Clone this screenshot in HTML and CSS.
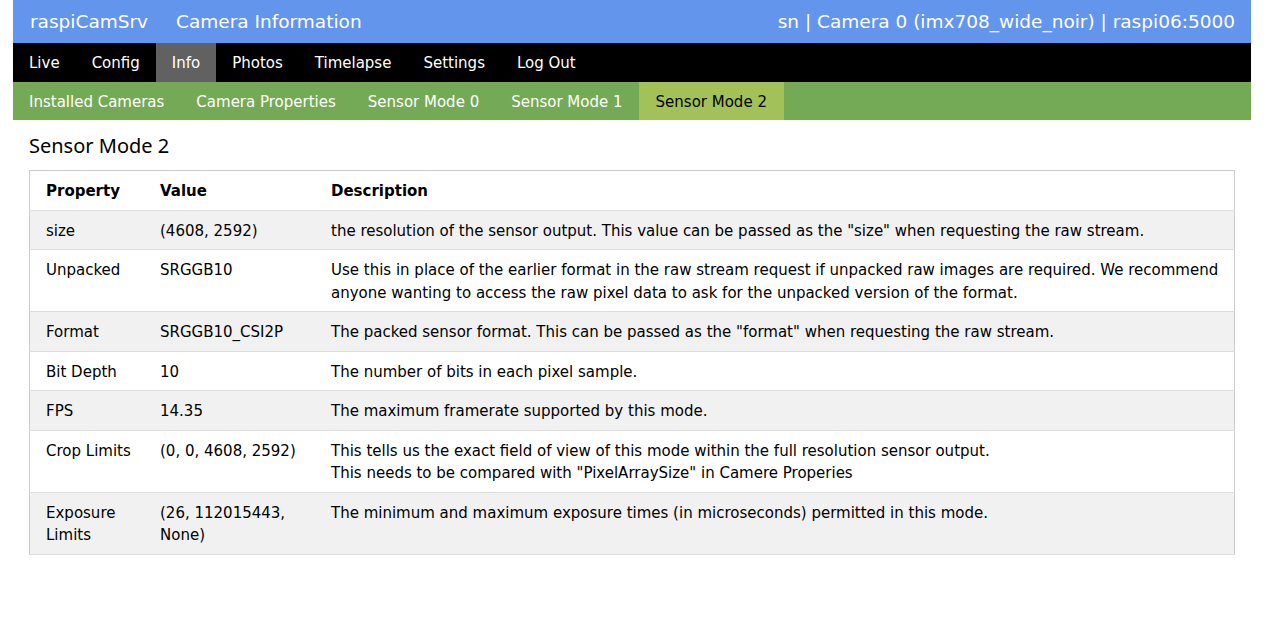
FILE: index.html
```html
<!DOCTYPE html>
<html lang="en">
<head>
<meta charset="utf-8">
<title>raspiCamSrv - Camera Information</title>
<link rel="stylesheet" href="styles.css">
</head>
<body>
<div class="page">
  <header class="topbar">
    <span class="brand">raspiCamSrv</span>
    <span class="title">Camera Information</span>
    <span class="camid">sn | Camera 0 (imx708_wide_noir) | raspi06:5000</span>
  </header>
  <nav class="mainnav">
    <a class="item">Live</a>
    <a class="item">Config</a>
    <a class="item active">Info</a>
    <a class="item">Photos</a>
    <a class="item">Timelapse</a>
    <a class="item">Settings</a>
    <a class="item">Log Out</a>
  </nav>
  <nav class="subnav">
    <a class="item">Installed Cameras</a>
    <a class="item">Camera Properties</a>
    <a class="item">Sensor Mode 0</a>
    <a class="item">Sensor Mode 1</a>
    <a class="item active">Sensor Mode 2</a>
  </nav>
  <main class="content">
    <h4 class="heading">Sensor Mode 2</h4>
    <table class="props">
      <thead>
        <tr><th class="c-prop">Property</th><th class="c-val">Value</th><th class="c-desc">Description</th></tr>
      </thead>
      <tbody>
        <tr><td>size</td><td>(4608, 2592)</td><td>the resolution of the sensor output. This value can be passed as the "size" when requesting the raw stream.</td></tr>
        <tr><td>Unpacked</td><td>SRGGB10</td><td>Use this in place of the earlier format in the raw stream request if unpacked raw images are required. We recommend anyone wanting to access the raw pixel data to ask for the unpacked version of the format.</td></tr>
        <tr><td>Format</td><td>SRGGB10_CSI2P</td><td>The packed sensor format. This can be passed as the "format" when requesting the raw stream.</td></tr>
        <tr><td>Bit Depth</td><td>10</td><td>The number of bits in each pixel sample.</td></tr>
        <tr><td>FPS</td><td>14.35</td><td>The maximum framerate supported by this mode.</td></tr>
        <tr><td>Crop Limits</td><td>(0, 0, 4608, 2592)</td><td>This tells us the exact field of view of this mode within the full resolution sensor output.<br>This needs to be compared with "PixelArraySize" in Camere Properies</td></tr>
        <tr><td>Exposure Limits</td><td>(26, 112015443, None)</td><td>The minimum and maximum exposure times (in microseconds) permitted in this mode.</td></tr>
      </tbody>
    </table>
  </main>
</div>
</body>
</html>
```

FILE: styles.css
```css
html, body {
  margin: 0;
  padding: 0;
  background: #fff;
}
body {
  font-family: "DejaVu Sans", Verdana, sans-serif;
  font-size: 15px;
  line-height: 1.5;
  color: #000;
}
.page {
  margin-left: 13px;
  width: 1238px;
}
.topbar {
  display: flex;
  align-items: center;
  height: 43px;
  background: #6495ed;
  color: #fff;
  font-size: 18.5px;
  padding: 1px 16px 0 17px;
  box-sizing: border-box;
}
.brand {
  margin-right: 28px;
}
.camid {
  margin-left: auto;
}
.mainnav, .subnav {
  display: flex;
  height: 39px;
}
.mainnav {
  background: #000;
}
.subnav {
  background: #74aa55;
  height: 38px;
}
.item {
  display: block;
  padding: 9px 16px 7px;
  color: #fff;
  text-decoration: none;
}
.mainnav .item.active {
  background: #616161;
}
.subnav .item.active {
  background: #a3c159;
  color: #000;
  padding-left: 17px;
  padding-right: 17px;
}
.content {
  padding: 0 16px;
}
.heading {
  font-family: "Noto Sans", "Open Sans", Arial, sans-serif;
  font-weight: 400;
  font-size: 20px;
  line-height: 30px;
  margin: 0;
  padding: 11px 0 9px;
}
.props {
  width: 100%;
  border-collapse: collapse;
  border: 1px solid #ccc;
}
.props th, .props td {
  text-align: left;
  vertical-align: top;
  padding: 9px 8px 7px;
}
.props th:first-child, .props td:first-child {
  padding-left: 16px;
}
.props tr {
  border-bottom: 1px solid #ddd;
}
.props tbody tr:nth-child(odd) {
  background: #f1f1f1;
}
.c-prop { width: 98px; }
.c-val { width: 155px; }
```
